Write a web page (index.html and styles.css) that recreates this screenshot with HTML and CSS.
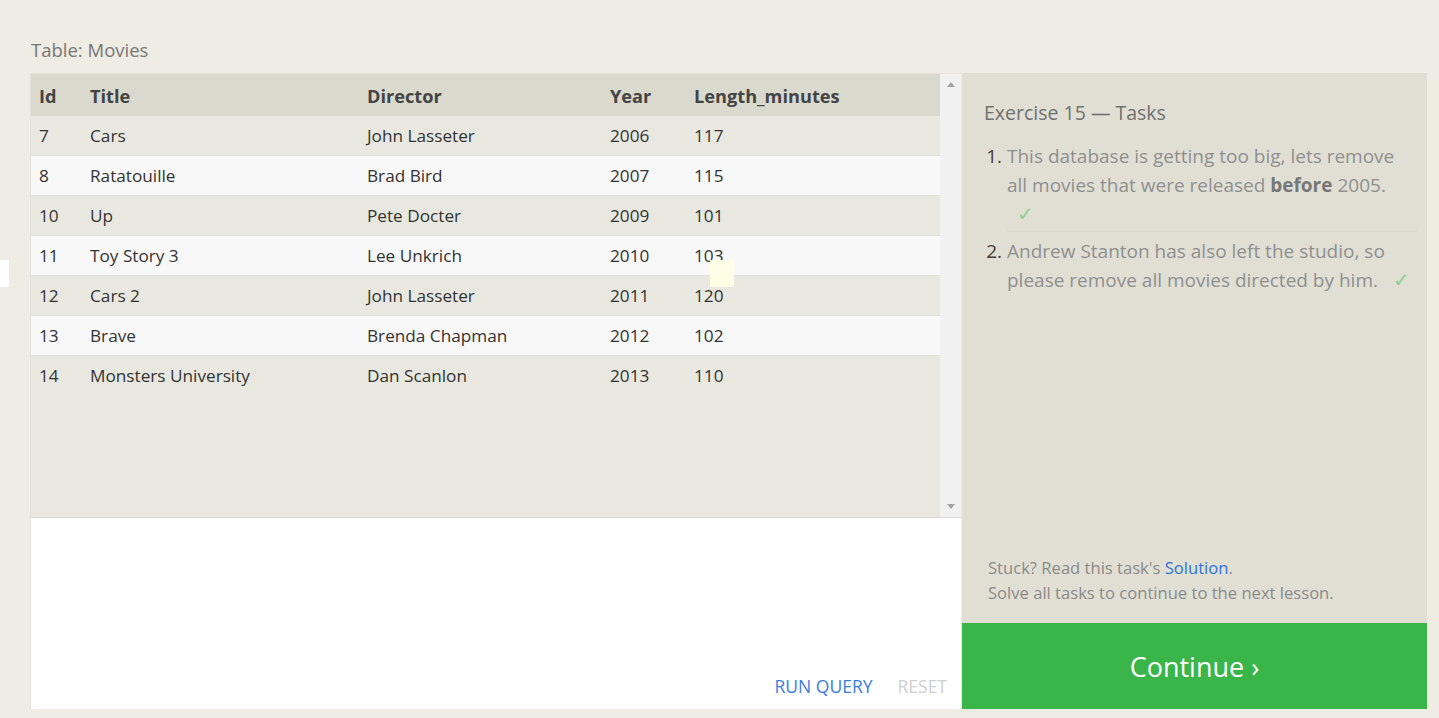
FILE: index.html
```html
<!DOCTYPE html>
<html>
<head>
<meta charset="utf-8">
<link rel="stylesheet" href="styles.css">
</head>
<body>
<div class="page">
  <div class="caption">Table: Movies</div>
  <div class="main">
    <div class="left">
      <div class="tablebox">
        <div class="tablescroll">
          <table class="grid">
            <thead>
              <tr><th class="c-id">Id</th><th class="c-title">Title</th><th class="c-dir">Director</th><th class="c-year">Year</th><th>Length_minutes</th></tr>
            </thead>
            <tbody>
              <tr><td>7</td><td>Cars</td><td>John Lasseter</td><td>2006</td><td>117</td></tr>
              <tr><td>8</td><td>Ratatouille</td><td>Brad Bird</td><td>2007</td><td>115</td></tr>
              <tr><td>10</td><td>Up</td><td>Pete Docter</td><td>2009</td><td>101</td></tr>
              <tr><td>11</td><td>Toy Story 3</td><td>Lee Unkrich</td><td>2010</td><td>103</td></tr>
              <tr><td>12</td><td>Cars 2</td><td>John Lasseter</td><td>2011</td><td>120</td></tr>
              <tr><td>13</td><td>Brave</td><td>Brenda Chapman</td><td>2012</td><td>102</td></tr>
              <tr><td>14</td><td>Monsters University</td><td>Dan Scanlon</td><td>2013</td><td>110</td></tr>
            </tbody>
          </table>
        </div>
        <div class="scrollbar">
          <span class="arrow up"></span>
          <span class="arrow down"></span>
        </div>
      </div>
      <div class="editor">
        <div class="actions">
          <span class="run">RUN QUERY</span>
          <span class="reset">RESET</span>
        </div>
      </div>
    </div>
    <div class="right">
      <div class="tasks">
        <h2 class="tasks-title">Exercise 15 — Tasks</h2>
        <ol class="task-list">
          <li>This database is getting too big, lets remove all movies that were released <b>before</b> 2005.<br><span class="check">✓</span></li>
          <li>Andrew Stanton has also left the studio, so please remove all movies directed by him. <span class="check">✓</span></li>
        </ol>
      </div>
      <div class="help">
        <div>Stuck? Read this task's <span class="link">Solution</span>.</div>
        <div>Solve all tasks to continue to the next lesson.</div>
      </div>
      <div class="continue">Continue ›</div>
    </div>
  </div>
  <div class="mark-white"></div>
  <div class="mark-yellow"></div>
</div>
</body>
</html>
```

FILE: styles.css
```css
html, body {
  margin: 0;
  padding: 0;
}
body {
  background: #efece4;
  font-family: "Open Sans", "Noto Sans", sans-serif;
  color: #444;
  width: 1439px;
  height: 718px;
  overflow: hidden;
}
.page {
  position: relative;
  padding: 37px 0 0 31px;
}
.caption {
  font-size: 18.5px;
  color: #777;
  line-height: 26px;
  height: 36px;
}
.main {
  display: flex;
  height: 636px;
}
.left {
  width: 930px;
  display: flex;
  flex-direction: column;
  background: #fff;
  box-shadow: -1px 0 0 #e2e0d8;
}
.tablebox {
  height: 443px;
  display: flex;
  background: #e9e8e0;
  border-top: 1px solid #e6e4dc;
  border-bottom: 1px solid #dcdbd3;
}
.tablescroll {
  flex: 1;
}
.grid {
  border-collapse: collapse;
  width: 100%;
  font-size: 17.2px;
}
.grid th {
  background: #dad9cd;
  font-weight: 700;
  font-size: 18.2px;
  color: #444;
  text-align: left;
  height: 40px;
  padding: 2px 0 0 8px;
}
.grid td {
  height: 39px;
  padding: 0 0 0 8px;
  border-bottom: 1px solid #e2e1dc;
  color: #333;
}
.grid tbody tr:nth-child(odd) td {
  background: #e9e8e0;
}
.grid tbody tr:nth-child(even) td {
  background: #f8f8f8;
}
.grid tbody tr:last-child td {
  border-bottom: none;
}
.c-id { width: 43px; }
.c-title { width: 269px; }
.c-dir { width: 235px; }
.c-year { width: 76px; }
.scrollbar {
  width: 21px;
  background: #f1f1f1;
  display: flex;
  flex-direction: column;
  justify-content: space-between;
  align-items: center;
  padding: 8px 0 8px 0;
  box-sizing: border-box;
}
.arrow {
  width: 0;
  height: 0;
  border-left: 4px solid transparent;
  border-right: 4px solid transparent;
}
.arrow.up {
  border-bottom: 5px solid #a3a3a3;
}
.arrow.down {
  border-top: 5px solid #a3a3a3;
}
.editor {
  flex: 1;
  display: flex;
  flex-direction: column;
  justify-content: flex-end;
}
.actions {
  display: flex;
  justify-content: flex-end;
  gap: 25px;
  padding: 0 14px 11px 0;
  font-size: 17.5px;
  line-height: 24px;
}
.run { color: #3b7ddd; }
.reset { color: #cfcfcf; }
.right {
  width: 465px;
  margin-left: 1px;
  background: #e1dfd4;
  display: flex;
  flex-direction: column;
}
.tasks {
  flex: 1;
  padding: 27px 10px 0 22px;
}
.tasks-title {
  margin: 0 0 16px 0;
  font-weight: 400;
  font-size: 19.5px;
  line-height: 26px;
  color: #707070;
}
.task-list {
  margin: 0;
  padding: 0 0 0 23px;
  font-size: 19px;
  line-height: 29px;
  color: #8f8f8f;
}
.task-list li {
  padding: 0 0 2px 0;
  margin-bottom: 5px;
  border-bottom: 1px solid #d8d6ca;
}
.task-list li:last-child {
  border-bottom: none;
}
.task-list li::marker {
  color: #4a3a33;
}
.task-list b {
  color: #777;
}
.check {
  color: #8fcf90;
  margin-left: 10px;
  font-size: 20px;
  line-height: 1;
}
.help {
  padding: 0 20px 18px 26px;
  font-size: 16.6px;
  line-height: 25px;
  color: #8a8a8a;
}
.link { color: #2f73d8; }
.continue {
  height: 86px;
  background: #3ab54a;
  color: #fff;
  font-size: 27px;
  display: flex;
  align-items: center;
  justify-content: center;
}
.mark-white {
  position: absolute;
  left: 0;
  top: 260px;
  width: 9px;
  height: 27px;
  background: #fff;
}
.mark-yellow {
  position: absolute;
  left: 710px;
  top: 260px;
  width: 24px;
  height: 27px;
  background: #fefde6;
}
```
